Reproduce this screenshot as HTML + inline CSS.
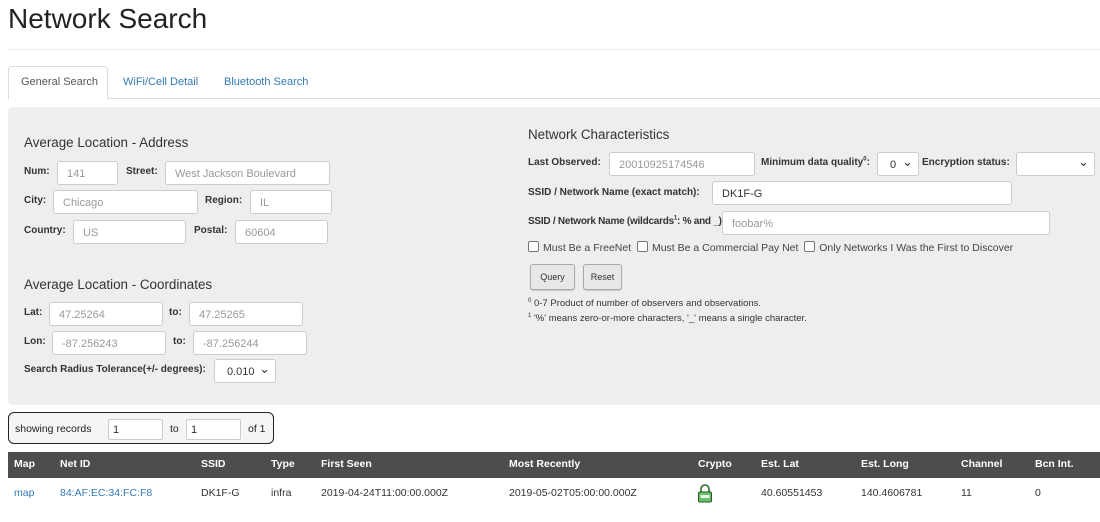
<!DOCTYPE html>
<html><head><style>
body{margin:0;width:1100px;height:522px;overflow:hidden;background:#fff;font-family:"Liberation Sans",Arial,sans-serif;color:#333;position:relative}
.a{position:absolute;white-space:nowrap}
.b{font-weight:bold;font-size:10px;color:#333}
.in{position:absolute;background:#fff;border:1px solid #ccc;border-radius:3px;height:24px;box-sizing:border-box;font-size:11px;color:#999;padding:6px 0 0 9px;white-space:nowrap}
.sel::after{content:"⌄";position:absolute;right:5px;top:1px;font-size:13px;color:#333}
h3{font-weight:normal;font-size:13.4px;margin:0;color:#333}
.cb{display:inline-block;width:9px;height:9px;border:1px solid #777;border-radius:2px;background:#fff;vertical-align:-1px;margin-right:4px}
.btn{position:absolute;background:#e8e8e8;border:1px solid #aaa;border-radius:3px;font-size:9px;color:#333;text-align:center;box-sizing:border-box;padding-top:7px;height:26px;box-shadow:0 1px 1px rgba(0,0,0,.15)}
.th{position:absolute;top:458px;color:#fff;font-weight:bold;font-size:10.5px}
.td{position:absolute;top:487px;font-size:10.5px;color:#333}
sup{font-size:6px;line-height:0}
</style></head><body>
<div class="a" style="left:8px;top:3px;font-size:28px;color:#222">Network Search</div>
<div class="a" style="left:8px;top:49px;width:1092px;height:1px;background:#eee"></div>
<div class="a" style="left:8px;top:98px;width:1092px;height:1px;background:#ddd"></div>
<div class="a" style="left:8px;top:66px;width:100px;height:33px;background:#fff;border:1px solid #ddd;border-bottom:none;border-radius:4px 4px 0 0;box-sizing:border-box"></div>
<div class="a" style="left:21px;top:76px;font-size:11px;color:#555">General Search</div>
<div class="a" style="left:123px;top:76px;font-size:11px;color:#337ab7">WiFi/Cell Detail</div>
<div class="a" style="left:224px;top:76px;font-size:11px;color:#337ab7">Bluetooth Search</div>
<div class="a" style="left:8px;top:107px;width:1100px;height:298px;background:#eee;border-radius:5px"></div>

<h3 class="a" style="left:24px;top:135px">Average Location - Address</h3>
<div class="a b" style="left:24px;top:166px">Num:</div><div class="in" style="left:57px;top:161px;width:61px">141</div>
<div class="a b" style="left:126px;top:166px">Street:</div><div class="in" style="left:165px;top:161px;width:165px">West Jackson Boulevard</div>
<div class="a b" style="left:24px;top:195px">City:</div><div class="in" style="left:53px;top:190px;width:145px">Chicago</div>
<div class="a b" style="left:205px;top:195px">Region:</div><div class="in" style="left:250px;top:190px;width:82px">IL</div>
<div class="a b" style="left:24px;top:225px">Country:</div><div class="in" style="left:73px;top:220px;width:113px">US</div>
<div class="a b" style="left:194px;top:225px">Postal:</div><div class="in" style="left:235px;top:220px;width:93px">60604</div>

<h3 class="a" style="left:24px;top:277px">Average Location - Coordinates</h3>
<div class="a b" style="left:24px;top:307px">Lat:</div><div class="in" style="left:49px;top:302px;width:114px">47.25264</div>
<div class="a b" style="left:169px;top:307px">to:</div><div class="in" style="left:189px;top:302px;width:114px">47.25265</div>
<div class="a b" style="left:24px;top:336px">Lon:</div><div class="in" style="left:52px;top:331px;width:114px">-87.256243</div>
<div class="a b" style="left:173px;top:336px">to:</div><div class="in" style="left:193px;top:331px;width:114px">-87.256244</div>
<div class="a b" style="left:24px;top:364px">Search Radius Tolerance(+/- degrees):</div><div class="in sel" style="left:214px;top:359px;width:62px;color:#333;padding-left:12px">0.010</div>

<h3 class="a" style="left:528px;top:127px">Network Characteristics</h3>
<div class="a b" style="left:528px;top:157px">Last Observed:</div><div class="in" style="left:609px;top:152px;width:146px">20010925174546</div>
<div class="a b" style="left:761px;top:157px">Minimum data quality<sup>0</sup>:</div><div class="in sel" style="left:877px;top:152px;width:42px;color:#333;padding-left:12px">0</div>
<div class="a b" style="left:922px;top:157px">Encryption status:</div><div class="in sel" style="left:1016px;top:152px;width:79px"></div>
<div class="a b" style="left:528px;top:187px">SSID / Network Name (exact match):</div><div class="in" style="left:712px;top:181px;width:300px;color:#333">DK1F-G</div>
<div class="a b" style="left:528px;top:216px;letter-spacing:-0.25px">SSID / Network Name (wildcards<sup>1</sup>: % and _):</div><div class="in" style="left:722px;top:211px;width:328px">foobar%</div>
<div class="a" style="left:528px;top:241px;font-size:10.5px;color:#444"><span class="cb"></span>Must Be a FreeNet &nbsp;<span class="cb"></span>Must Be a Commercial Pay Net &nbsp;<span class="cb"></span>Only Networks I Was the First to Discover</div>
<div class="btn" style="left:530px;top:264px;width:45px">Query</div>
<div class="btn" style="left:583px;top:264px;width:39px">Reset</div>
<div class="a" style="left:528px;top:298px;font-size:9.5px;color:#333"><sup>0</sup> 0-7 Product of number of observers and observations.</div>
<div class="a" style="left:528px;top:313px;font-size:9.5px;color:#333"><sup>1</sup> '%' means zero-or-more characters, '_' means a single character.</div>

<div class="a" style="left:8px;top:412px;width:266px;height:32px;border:1px solid #222;border-radius:6px;background:#f5f5f5;box-sizing:border-box"></div>
<div class="a" style="left:15px;top:423px;font-size:10.5px;color:#222">showing records</div>
<div class="in" style="left:108px;top:419px;width:55px;height:21px;padding-top:4px;color:#333;border-radius:2px;padding-left:4px">1</div>
<div class="a" style="left:170px;top:423px;font-size:10.5px;color:#222">to</div>
<div class="in" style="left:186px;top:419px;width:55px;height:21px;padding-top:4px;color:#333;border-radius:2px;padding-left:4px">1</div>
<div class="a" style="left:248px;top:423px;font-size:10.5px;color:#222">of 1</div>

<div class="a" style="left:8px;top:452px;width:1092px;height:26px;background:#4d4d4d"></div>
<div class="th" style="left:14px">Map</div><div class="th" style="left:60px">Net ID</div><div class="th" style="left:201px">SSID</div><div class="th" style="left:271px">Type</div><div class="th" style="left:321px">First Seen</div><div class="th" style="left:509px">Most Recently</div><div class="th" style="left:698px">Crypto</div><div class="th" style="left:761px">Est. Lat</div><div class="th" style="left:861px">Est. Long</div><div class="th" style="left:961px">Channel</div><div class="th" style="left:1035px">Bcn Int.</div>
<div class="td" style="left:14px;color:#337ab7">map</div><div class="td" style="left:60px;color:#337ab7">84:AF:EC:34:FC:F8</div><div class="td" style="left:201px">DK1F-G</div><div class="td" style="left:271px">infra</div><div class="td" style="left:321px">2019-04-24T11:00:00.000Z</div><div class="td" style="left:509px">2019-05-02T05:00:00.000Z</div>
<svg class="a" style="left:697px;top:484px" width="16" height="19" viewBox="0 0 16 19"><path d="M4 8V5a4 4 0 0 1 8 0v3" fill="none" stroke="#2a6a2a" stroke-width="1.6"/><rect x="1.5" y="8" width="13" height="10" rx="1.5" fill="#6bbf6b" stroke="#1f5a1f"/><rect x="3.5" y="11" width="9" height="3" fill="#e8f5e8"/></svg>
<div class="td" style="left:761px">40.60551453</div><div class="td" style="left:861px">140.4606781</div><div class="td" style="left:961px">11</div><div class="td" style="left:1035px">0</div>
</body></html>
